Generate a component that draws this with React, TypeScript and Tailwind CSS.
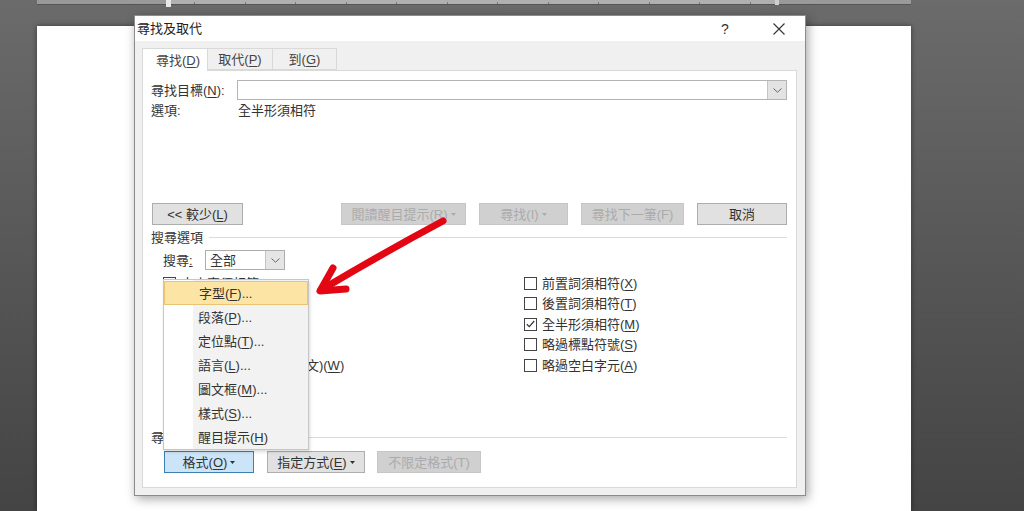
import React from "react";

const U = ({ c }: { c: string }) => (
  <span className="underline decoration-1 underline-offset-[2px]">{c}</span>
);

const Caret = ({ color = "#333" }: { color?: string }) => (
  <svg width="5" height="3" viewBox="0 0 5 3" className="ml-[3px] shrink-0">
    <path d="M0 0H5L2.5 3Z" fill={color} />
  </svg>
);

const Chevron = () => (
  <svg width="9" height="5" viewBox="0 0 9 5">
    <path d="M0.5 0.5L4.5 4.2L8.5 0.5" fill="none" stroke="#666" strokeWidth="1" />
  </svg>
);

const Btn = ({
  w,
  children,
  disabled,
  active,
  className = "",
}: {
  w: string;
  children: React.ReactNode;
  disabled?: boolean;
  active?: boolean;
  className?: string;
}) => {
  const tone = active
    ? "bg-[#cce4f7] border-[#3c7fb1] text-[#333]"
    : disabled
    ? "bg-[#d0d0d0] border-[#c6c6c6] text-[#ababab]"
    : "bg-[#e1e1e1] border-[#adadad] text-[#333]";
  return (
    <div
      className={`${w} h-[22px] border ${tone} flex items-center justify-center text-[13px] leading-none ${className}`}
    >
      {children}
    </div>
  );
};

const Check = ({ checked, children }: { checked?: boolean; children: React.ReactNode }) => (
  <div className="flex items-center h-[20.5px]">
    <div className="w-[13px] h-[13px] border border-[#444] bg-white flex items-center justify-center shrink-0">
      {checked && (
        <svg width="9" height="8" viewBox="0 0 9 8">
          <path d="M0.8 4.2L3.3 6.6L8.2 1" fill="none" stroke="#333" strokeWidth="1.2" />
        </svg>
      )}
    </div>
    <span className="ml-[5px] text-[13px] leading-none whitespace-nowrap text-[#333]">{children}</span>
  </div>
);

const SectionLabel = ({ children, lineGap }: { children: React.ReactNode; lineGap: string }) => (
  <div className="flex items-center h-[20px]">
    <span className="text-[13px] leading-none text-[#333] whitespace-nowrap">{children}</span>
    <div className={`flex-1 h-px bg-[#dcdcdc] ${lineGap}`} />
  </div>
);

const menuItems: { pre: string; key: string; post: string }[] = [
  { pre: "字型(", key: "F", post: ")..." },
  { pre: "段落(", key: "P", post: ")..." },
  { pre: "定位點(", key: "T", post: ")..." },
  { pre: "語言(", key: "L", post: ")..." },
  { pre: "圖文框(", key: "M", post: ")..." },
  { pre: "樣式(", key: "S", post: ")..." },
  { pre: "醒目提示(", key: "H", post: ")" },
];

export default function App() {
  return (
    <div className="relative w-[1024px] h-[511px] overflow-hidden bg-linear-to-b from-[#6b6b6b] to-[#444444] font-['Liberation_Sans','Noto_Sans_CJK_TC',sans-serif] flex flex-col">
      {/* ruler */}
      <div className="ml-[37px] w-[874px] h-[5px] bg-[#9a9a9a] border-b border-[#555555] relative shrink-0">
        <div className="absolute left-[131px] top-0 w-[609px] h-[4px] bg-[#b0b0b0] flex justify-between items-end px-[26px]">
          {Array.from({ length: 12 }).map((_, i) => (
            <div key={i} className="w-px h-[2px] bg-[#7a7a7a]" />
          ))}
        </div>
        <div className="absolute left-[129px] top-0 w-[5px] h-[7px] bg-[#e8e8e8]" />
        <div className="absolute left-[738px] top-0 w-[4px] h-[5px] bg-[#d0d0d0]" />
      </div>

      {/* page */}
      <div className="ml-[37px] mt-[21px] w-[874px] flex-1 bg-white shadow-[0_0_5px_rgba(0,0,0,0.45)]" />

      {/* dialog window */}
      <div className="absolute left-[134px] top-[15px] w-[672px] h-[481px] border border-[#8c8c8c] bg-[#f0f0f0] shadow-[2px_3px_10px_rgba(0,0,0,0.35)] flex flex-col">
        {/* title bar */}
        <div className="h-[25px] bg-white flex items-center pl-[2px] shrink-0">
          <span className="text-[13px] leading-none text-[#222]">尋找及取代</span>
          <span className="ml-auto text-[14px] leading-none text-[#333] w-[10px] text-center">?</span>
          <div className="ml-[42px] mr-[19px] w-[14px] h-[14px] flex items-center justify-center">
            <svg width="12" height="12" viewBox="0 0 12 12">
              <path d="M0.5 0.5L11.5 11.5M11.5 0.5L0.5 11.5" stroke="#333" strokeWidth="1.1" />
            </svg>
          </div>
        </div>

        {/* body */}
        <div className="flex-1 flex flex-col pl-[7px] pr-[8px] pt-[7px] pb-[7px]">
          {/* tabs */}
          <div className="flex h-[22px] shrink-0">
            <div className="w-[66px] h-[23px] bg-white border border-[#d9d9d9] border-b-0 relative z-10 flex items-center pl-[13px] text-[13px] leading-none text-[#444]">
              尋找(<U c="D" />)
            </div>
            <div className="w-[65px] h-[22px] border border-[#d9d9d9] border-l-0 flex items-center justify-center text-[13px] leading-none text-[#444]">
              取代(<U c="P" />)
            </div>
            <div className="w-[64px] h-[22px] border border-[#d9d9d9] border-l-0 flex items-center justify-center text-[13px] leading-none text-[#444]">
              到(<U c="G" />)
            </div>
          </div>

          {/* panel */}
          <div className="flex-1 bg-white border border-[#d9d9d9] flex flex-col pl-[8px] pr-[9px]">
            {/* find row */}
            <div className="mt-[9px] h-[20px] flex items-center">
              <span className="w-[86px] text-[13px] leading-none text-[#333] whitespace-nowrap">
                尋找目標(<U c="N" />):
              </span>
              <div className="flex-1 h-[20px] border border-[#b4b4b4] bg-white flex justify-end">
                <div className="w-[19px] h-full bg-[#e3e3e3] border-l border-[#c4c4c4] flex items-center justify-center">
                  <Chevron />
                </div>
              </div>
            </div>

            {/* options row */}
            <div className="h-[20px] flex items-center">
              <span className="w-[87px] text-[13px] leading-none text-[#333]">選項:</span>
              <span className="text-[13px] leading-none text-[#333]">全半形須相符</span>
            </div>

            {/* button row */}
            <div className="mt-[83px] flex items-center">
              <Btn w="w-[91px]" className="ml-px">
                &lt;&lt; 較少(<U c="L" />)
              </Btn>
              <div className="ml-auto flex gap-[13px]">
                <Btn w="w-[125px]" disabled>
                  閱讀醒目提示(R)
                  <Caret color="#ababab" />
                </Btn>
                <Btn w="w-[89px]" disabled>
                  尋找(I)
                  <Caret color="#ababab" />
                </Btn>
                <Btn w="w-[103px]" disabled>
                  尋找下一筆(F)
                </Btn>
                <Btn w="w-[90px]">取消</Btn>
              </div>
            </div>

            {/* search options */}
            <div className="mt-[2px]">
              <SectionLabel lineGap="ml-[6px]">搜尋選項</SectionLabel>
            </div>

            <div className="mt-[3px] ml-[12px] h-[20px] flex items-center">
              <span className="w-[42px] text-[13px] leading-none text-[#333]">
                搜尋<span className="underline">:</span>
              </span>
              <div className="w-[80px] h-[20px] border border-[#adadad] bg-white flex items-center">
                <span className="flex-1 pl-[4px] text-[13px] leading-none text-[#333]">全部</span>
                <div className="w-[19px] h-full bg-[#e5e5e5] border-l border-[#c4c4c4] flex items-center justify-center">
                  <Chevron />
                </div>
              </div>
            </div>

            <div className="mt-[3px] ml-[12px] flex">
              <div className="w-[361px] flex flex-col">
                <Check>
                  大小寫須相符(<U c="H" />)
                </Check>
                <Check>
                  全字拼寫須相符(<U c="Y" />)
                </Check>
                <Check>
                  使用萬用字元(<U c="U" />)
                </Check>
                <Check>
                  發音類似 (英文)(<U c="K" />)
                </Check>
                <Check>
                  尋找所有字詞形態 (英文)(<U c="W" />)
                </Check>
              </div>
              <div className="flex flex-col">
                <Check>
                  前置詞須相符(<U c="X" />)
                </Check>
                <Check>
                  後置詞須相符(<U c="T" />)
                </Check>
                <Check checked>
                  全半形須相符(<U c="M" />)
                </Check>
                <Check>
                  略過標點符號(<U c="S" />)
                </Check>
                <Check>
                  略過空白字元(<U c="A" />)
                </Check>
              </div>
            </div>

            {/* find section */}
            <div className="mt-[51.5px]">
              <SectionLabel lineGap="ml-[6px]">尋找</SectionLabel>
            </div>
            <div className="mt-[4px] flex items-center">
              <Btn w="w-[90px]" active className="ml-[13px]">
                格式(<U c="O" />)
                <Caret />
              </Btn>
              <Btn w="w-[98px]" className="ml-[13px]">
                指定方式(<U c="E" />)
                <Caret />
              </Btn>
              <Btn w="w-[104px]" disabled className="ml-[12px]">
                不限定格式(T)
              </Btn>
            </div>
          </div>
        </div>
      </div>

      {/* dropdown menu */}
      <div className="absolute left-[163px] top-[279px] w-[146px] h-[171px] border border-[#c6c6c6] bg-[#f2f2f2] shadow-[1px_2px_3px_rgba(0,0,0,0.15)] flex">
        <div className="absolute left-0 top-0 w-[29px] h-full bg-white" />
        <div className="relative flex-1 flex flex-col pt-[1px]">
          {menuItems.map((m, i) => (
            <div
              key={m.key}
              className={`h-[24px] flex items-center pl-[34px] text-[13px] leading-none text-[#333] whitespace-nowrap ${
                i === 0 ? "bg-[#fce4a4] border border-[#eac46f] pl-[33px]" : ""
              }`}
            >
              {m.pre}
              <U c={m.key} />
              {m.post}
            </div>
          ))}
        </div>
      </div>

      {/* red arrow annotation */}
      <svg className="absolute left-0 top-0 pointer-events-none" width="1024" height="511" viewBox="0 0 1024 511">
        <path
          d="M443 221 Q 385 252 321 290"
          fill="none"
          stroke="#e30613"
          strokeWidth="7"
          strokeLinecap="round"
        />
        <path
          d="M333 268 L320 291 L346 289"
          fill="none"
          stroke="#e30613"
          strokeWidth="7"
          strokeLinecap="round"
          strokeLinejoin="round"
        />
      </svg>
    </div>
  );
}
